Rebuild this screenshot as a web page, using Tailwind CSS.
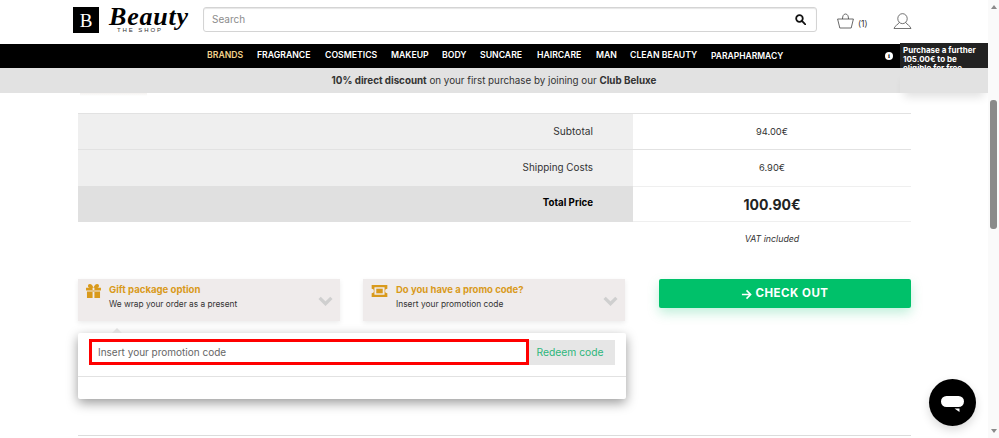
<!DOCTYPE html>
<html lang="en"><head><meta charset="utf-8"><title>Beauty The Shop</title>
<script src="https://cdn.jsdelivr.net/npm/@tailwindcss/browser@4"></script></head>
<body class="bg-white">
<div class="relative flex h-[438px] w-[999px] overflow-hidden font-['Inter','Open_Sans',sans-serif] text-[#333]">
  <div class="relative flex w-[988px] flex-col">
    <header class="flex h-[44px] items-start pl-[73px] pt-[7px]">
      <div class="flex h-[26px] w-[26px] items-center justify-center bg-black font-['Liberation_Serif',serif] text-[19px] leading-none text-white">B</div>
      <div class="ml-[10px] flex h-[27px] w-[84px] flex-col">
        <span class="font-['Liberation_Serif',serif] text-[26px] font-bold italic leading-[20px] tracking-[0.8px] text-black">Beauty</span>
        <span class="ml-[8px] whitespace-nowrap font-['Liberation_Sans',sans-serif] text-[6px] leading-[7px] tracking-[1.9px] text-[#333]">THE SHOP</span>
      </div>
      <div class="ml-[10px] flex h-[25px] w-[614px] items-center justify-between rounded-[3px] border border-[#d4d4d4] pl-[8px] pr-[10px] shadow-[inset_0_1px_1px_rgba(0,0,0,0.1)]">
        <span class="text-[10px] text-[#8c8c8c]">Search</span>
        <svg viewBox="0 0 16 16" class="h-[11px] w-[11px]" fill="none" stroke="#111" stroke-width="2.6"><circle cx="6.5" cy="6.5" r="4.8"/><path d="M10 10l5 5" stroke-linecap="round"/></svg>
      </div>
      <div class="ml-[20px] mt-[6px] flex items-end">
        <svg viewBox="0 0 17 16" class="h-[16px] w-[17px]" fill="none" stroke="#444" stroke-width="0.8"><path d="M0.600 6h15.800l-2.200 9H2.800z"/><path d="M5.500 6c0-3 1-5 3-5s3 2 3 5"/></svg>
        <span class="ml-[4px] text-[8.5px] leading-[10px] text-[#333]">(1)</span>
      </div>
      <svg viewBox="0 0 20 17" class="ml-[25px] mt-[6px] h-[16px] w-[19px]" fill="none" stroke="#444" stroke-width="0.8"><ellipse cx="10" cy="6" rx="5" ry="5.300"/><path d="M6.500 10C5.500 12.500 2 13 1 16.500h18C18 13 14.500 12.500 13.500 10"/></svg>
    </header>
    <nav class="flex h-[24px] items-center bg-black pl-[207px] text-[8.7px] font-semibold text-white">
      <span class="w-[50px] text-[#f2d28c]">BRANDS</span>
      <span class="w-[68px]">FRAGRANCE</span>
      <span class="w-[66px]">COSMETICS</span>
      <span class="w-[51px]">MAKEUP</span>
      <span class="w-[38px]">BODY</span>
      <span class="w-[57px]">SUNCARE</span>
      <span class="w-[59px]">HAIRCARE</span>
      <span class="w-[34px]">MAN</span>
      <span class="w-[81px]">CLEAN BEAUTY</span>
      <span class="text-[8.5px]">PARAPHARMACY</span>
    </nav>
    <div class="flex h-[25px] items-center justify-center bg-[#e2e2e2] pt-px text-[9.8px] text-[#333]">
      <span><b class="font-bold">10% direct discount</b> on your first purchase by joining our <b class="font-bold">Club Beluxe</b></span>
    </div>
    <main class="flex flex-1 flex-col pl-[78px] pr-[77px] pt-[20px]">
      <div class="grid grid-cols-[555px_278px] text-[9.3px]">
        <div class="flex h-[37px] items-center justify-end border-y border-[#e2e2e2] bg-[#efefef] pr-[40px] text-[10.2px]">Subtotal</div>
        <div class="flex h-[37px] items-center justify-center border-y border-[#e2e2e2]">94.00€</div>
        <div class="flex h-[36px] items-center justify-end bg-[#efefef] pb-px pr-[40px] text-[9.9px]">Shipping Costs</div>
        <div class="flex h-[36px] items-center justify-center pb-px">6.90€</div>
        <div class="flex h-[36px] items-center justify-end bg-[#e0e0e0] pb-[2px] pr-[40px] text-[9.7px] font-bold text-black">Total Price</div>
        <div class="flex h-[36px] items-center justify-center border-y border-[#efefef] text-[14px] font-bold text-[#222]">100.90€</div>
      </div>
      <div class="grid grid-cols-[555px_278px] pt-[11px]">
        <div></div>
        <div class="text-center text-[8.8px] italic leading-[12px]">VAT included</div>
      </div>
      <div class="mt-[34px] flex items-start">
        <div class="flex h-[42px] w-[262px] items-start bg-[#efebeb] pl-[8px] pt-[5px] shadow-[0_2px_5px_rgba(0,0,0,0.08)]">
          <svg viewBox="0 0 16 15" class="h-[14px] w-[15px]" fill="#d99a1c"><path d="M0 4h16v3H0zM1 8h6v7H1zM9 8h6v7H9zM7 4V8h2V4zM4 0c2 0 3 1.500 4 4 1-2.500 2-4 4-4 2.500 0 2.500 4 0 4H4C1.500 4 1.500 0 4 0z"/></svg>
          <div class="ml-[8px] flex-1">
            <div class="text-[9.6px] font-bold leading-[12px] text-[#d99a1c]">Gift package option</div>
            <div class="mt-[2px] text-[8.3px] leading-[12px] text-[#333]">We wrap your order as a present</div>
          </div>
          <svg viewBox="0 0 16 11" class="mr-[7px] mt-[12px] h-[10px] w-[15px]" fill="none" stroke="#cfcfcf" stroke-width="3.6"><path d="M1.500 2l6.500 6.500L14.500 2"/></svg>
        </div>
        <div class="ml-[23px] flex h-[42px] w-[262px] items-start bg-[#efebeb] pl-[8px] pt-[5px] shadow-[0_2px_5px_rgba(0,0,0,0.08)]">
          <svg viewBox="0 0 17 13" class="mt-[1px] h-[12px] w-[17px]" fill="#d99a1c"><path fill-rule="evenodd" d="M0 0h17v4a2.500 2.500 0 0 0 0 5v4H0V9a2.500 2.500 0 0 0 0-5zM3 2.500v8h11v-8z"/><path d="M5 4h7v5H5z"/></svg>
          <div class="ml-[8px] flex-1">
            <div class="text-[9.5px] font-bold leading-[12px] text-[#d99a1c]">Do you have a promo code?</div>
            <div class="mt-[2px] text-[8.4px] leading-[12px] text-[#333]">Insert your promotion code</div>
          </div>
          <svg viewBox="0 0 16 11" class="mr-[7px] mt-[12px] h-[10px] w-[15px]" fill="none" stroke="#cfcfcf" stroke-width="3.6"><path d="M1.500 2l6.500 6.500L14.500 2"/></svg>
        </div>
        <div class="ml-[34px] flex h-[29px] w-[252px] items-center justify-center rounded-[2px] bg-[#00c16a] pt-px text-[11.5px] font-bold tracking-[0.5px] text-white shadow-[0_5px_12px_rgba(0,193,106,0.25)]">
          <svg viewBox="0 0 12 12" class="mr-[3px] h-[11px] w-[11px]" fill="none" stroke="#fff" stroke-width="1.7"><path d="M1 6h9.500M6 1.500L10.500 6 6 10.500"/></svg>CHECK OUT
        </div>
      </div>
      <div class="mb-[2px] mt-auto h-px w-[833px] bg-[#dcdcdc]"></div>
    </main>
    <div class="absolute left-[80px] top-[93px] h-[3px] w-[67px] bg-gradient-to-b from-[#f4f2f0] to-white"></div>
    <div class="absolute left-[78px] top-[333px] h-[66px] w-[548px] rounded-[2px] bg-white shadow-[0_4px_12px_rgba(0,0,0,0.4)]">
      <div class="absolute left-[34px] top-[-5px] h-0 w-0 border-x-[5px] border-b-[5px] border-x-transparent border-b-[#dfdfdf]"></div>
      <div class="flex items-end px-[11px] pt-[6px]">
        <div class="flex h-[26px] w-[440px] items-center border-[3px] border-[#ff0000] pl-[6px] text-[10px] text-[#666]">Insert your promotion code</div>
        <div class="flex h-[25px] w-[86px] items-center justify-center bg-[#e6e6e6] pr-[4px] text-[10.3px] text-[#2fb67c]">Redeem code</div>
      </div>
      <div class="mt-[11px] h-px bg-[#e2e2e2]"></div>
    </div>
    <div class="absolute left-[900px] top-[43px] h-[25px] w-[88px] overflow-hidden bg-[#222] pl-[3px] pr-[10px] pt-[3px] text-[8px] font-bold leading-[9px] text-white">Purchase a further 105.00€ to be eligible for free</div>
    <div class="absolute left-[900px] top-[68px] h-[25px] w-[88px] shadow-[0_8px_10px_-4px_rgba(0,0,0,0.12)]"></div>
    <div class="absolute left-[885px] top-[52px] flex h-[8px] w-[8px] items-center justify-center rounded-full bg-white font-['Liberation_Serif',serif] text-[7px] font-bold leading-none text-black">i</div>
    <div class="absolute left-[929px] top-[379px] flex h-[47px] w-[47px] items-center justify-center rounded-full bg-black pt-[3px] shadow-[0_4px_10px_rgba(0,0,0,0.15)]">
      <svg viewBox="0 0 23 16" class="h-[16px] w-[23px]"><rect x="0" y="0" width="23" height="11" rx="5.500" fill="#fff"/><path d="M13.500 12.500h5V16z" fill="#fff"/></svg>
    </div>
  </div>
  <div class="relative flex w-[11px] flex-col items-center bg-[#fafafa]">
    <div class="mt-[5px] h-0 w-0 border-x-[3px] border-b-[4px] border-x-transparent border-b-[#8a8a8a]"></div>
    <div class="mt-[91px] h-[129px] w-[7px] rounded-[3px] bg-[#8a8a8a]"></div>
    <div class="mb-[5px] mt-auto h-0 w-0 border-x-[3px] border-t-[4px] border-x-transparent border-t-[#8a8a8a]"></div>
  </div>
</div>
</body></html>
